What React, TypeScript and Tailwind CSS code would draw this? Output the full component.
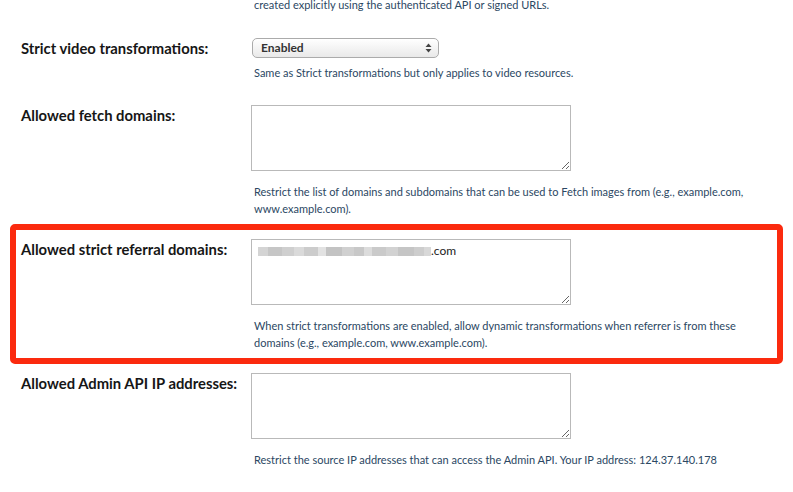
import React from "react";

const font = { fontFamily: "Lato, 'Open Sans', sans-serif" };

function Label({ children }: { children: React.ReactNode }) {
  return <div className="text-[14.8px] font-bold leading-[20px] text-[#161616]">{children}</div>;
}

function Help({ children, className = "" }: { children: React.ReactNode; className?: string }) {
  return (
    <p className={"pl-[3px] pr-[20px] text-[11px] leading-[17px] text-[#2b4763] " + className}>
      {children}
    </p>
  );
}

function Area({ children }: { children?: React.ReactNode }) {
  return (
    <div className="relative h-[66px] w-[320px]">
      <textarea
        className="block h-full w-full resize border border-[#b9b9b9] bg-white outline-none"
        defaultValue=""
      />
      {children}
    </div>
  );
}

function Row({ label, children, className = "" }: { label: string; children: React.ReactNode; className?: string }) {
  return (
    <div className={"grid grid-cols-[251px_1fr] " + className}>
      <div className="pl-[21px]">
        <Label>{label}</Label>
      </div>
      <div className="flex flex-col">{children}</div>
    </div>
  );
}

// pixelated stand-in for the redacted domain
const blur = [
  ["w-[10px]", "bg-[#d4d4d4]"],
  ["w-[14px]", "bg-[#c6c6c6]"],
  ["w-[12px]", "bg-[#cfcfcf]"],
  ["w-[10px]", "bg-[#dadada]"],
  ["w-[14px]", "bg-[#cccccc]"],
  ["w-[8px]", "bg-[#e2e2e2]"],
  ["w-[16px]", "bg-[#c3c3c3]"],
  ["w-[12px]", "bg-[#d0d0d0]"],
  ["w-[10px]", "bg-[#c8c8c8]"],
  ["w-[8px]", "bg-[#dcdcdc]"],
  ["w-[14px]", "bg-[#cacaca]"],
  ["w-[12px]", "bg-[#d2d2d2]"],
  ["w-[16px]", "bg-[#c5c5c5]"],
  ["w-[10px]", "bg-[#cdcdcd]"],
  ["w-[7px]", "bg-[#d8d8d8]"],
];

export default function App() {
  return (
    <div className="h-[492px] w-[793px] overflow-hidden bg-white" style={font}>
      <p className="-mt-[4px] pl-[254px] text-[11px] leading-[17px] text-[#2b4763]">
        created explicitly using the authenticated API or signed URLs.
      </p>

      <Row label="Strict video transformations:" className="mt-[25px]">
        <div className="ml-[1px] flex h-[20px] w-[187px] items-center justify-between rounded-[5px] border border-[#ababab] bg-gradient-to-b from-white to-[#e9e9e9] pl-[8px] pr-[6px] shadow-[inset_0_1px_0_#fff]">
          <span className="text-[12px] font-bold text-[#333]">Enabled</span>
          <svg width="7" height="10" viewBox="0 0 7 10" className="text-[#444]">
            <path d="M3.5 0.5 L6.5 4 L0.5 4 Z" fill="currentColor" />
            <path d="M3.5 9.5 L6.5 6 L0.5 6 Z" fill="currentColor" />
          </svg>
        </div>
        <Help className="mt-[6px]">Same as Strict transformations but only applies to video resources.</Help>
      </Row>

      <Row label="Allowed fetch domains:" className="mt-[24px]">
        <Area />
        <Help className="mt-[12px]">
          Restrict the list of domains and subdomains that can be used to Fetch images from (e.g., example.com,
          www.example.com).
        </Help>
      </Row>

      <div className="mx-[10px] mt-[7px] grid grid-cols-[235px_1fr] rounded-[5px] border-[6px] border-[#fb2a0e] pb-[7px] pt-[9px]">
        <div className="pl-[5px]">
          <Label>Allowed strict referral domains:</Label>
        </div>
        <div className="flex flex-col">
          <Area>
            <div className="pointer-events-none absolute left-[7px] top-[5px] flex items-center">
              <div className="flex h-[9px] items-stretch blur-[0.5px]">
                {blur.map(([w, c], i) => (
                  <span key={i} className={w + " " + c} />
                ))}
              </div>
              <span className="text-[12px] leading-[14px] text-[#222]">.com</span>
            </div>
          </Area>
          <Help className="mt-[12px]">
            When strict transformations are enabled, allow dynamic transformations when referrer is from these
            domains (e.g., example.com, www.example.com).
          </Help>
        </div>
      </div>

      <Row label="Allowed Admin API IP addresses:" className="mt-[9px]">
        <Area />
        <Help className="mt-[12px]">
          Restrict the source IP addresses that can access the Admin API. Your IP address: 124.37.140.178
        </Help>
      </Row>
    </div>
  );
}
